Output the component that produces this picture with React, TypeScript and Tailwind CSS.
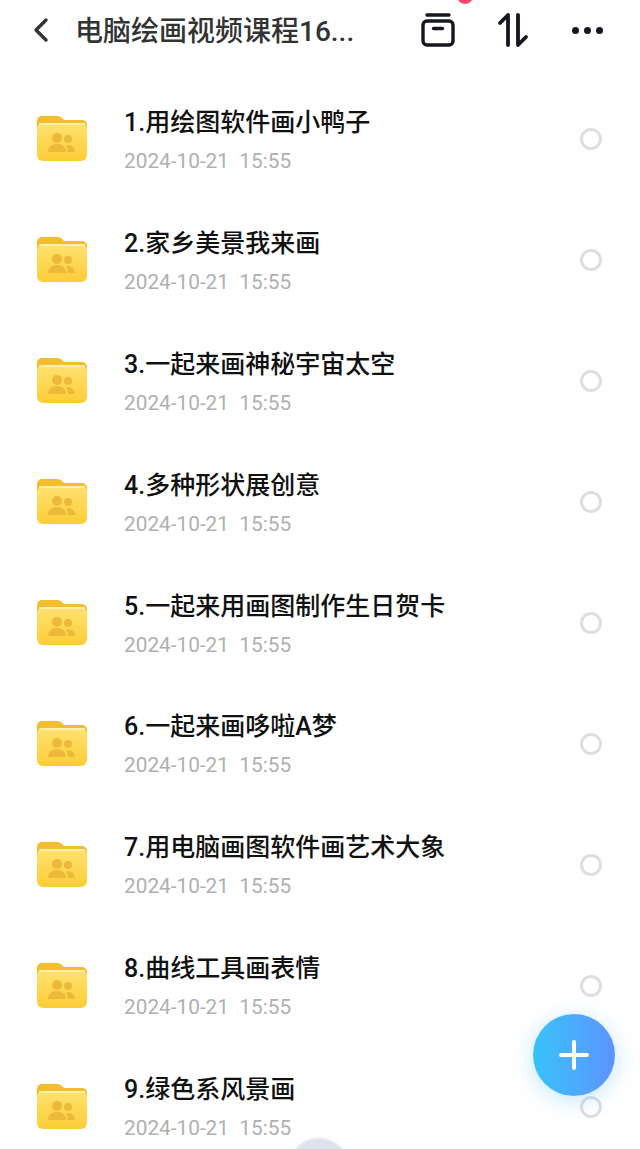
const rows = [
  '1.用绘图软件画小鸭子',
  '2.家乡美景我来画',
  '3.一起来画神秘宇宙太空',
  '4.多种形状展创意',
  '5.一起来用画图制作生日贺卡',
  '6.一起来画哆啦A梦',
  '7.用电脑画图软件画艺术大象',
  '8.曲线工具画表情',
  '9.绿色系风景画',
]

function FolderIcon() {
  return (
    <svg width="52" height="48" viewBox="0 0 52 48" className="shrink-0 blur-[0.5px]">
      <defs>
        <linearGradient id="folderBody" x1="0" y1="0" x2="0" y2="1">
          <stop offset="0" stopColor="#ffe272" />
          <stop offset="1" stopColor="#fccd36" />
        </linearGradient>
      </defs>
      <path d="M1 6a5 5 0 0 1 5-5h15c3 0 4 1 6 3l1 1h18a5 5 0 0 1 5 5v10H1z" fill="#f3bd2e" />
      <rect x="1" y="8" width="50" height="38" rx="6" fill="url(#folderBody)" />
      <rect x="3" y="8" width="46" height="2" rx="1" fill="#fff0ae" />
      <circle cx="21" cy="23" r="5" fill="#edb93a" />
      <path d="M12 37c0-5 4-8 9-8s9 3 9 8z" fill="#edb93a" />
      <circle cx="32" cy="24" r="4" fill="#edb93a" />
      <path d="M32 30c4 0 7 3 7 7h-7c0-3-1-5-2-6z" fill="#edb93a" />
    </svg>
  )
}

function ArchiveIcon() {
  return (
    <svg width="36" height="36" viewBox="0 0 36 36" fill="none" stroke="#14171f" strokeWidth="3.4" strokeLinecap="round" strokeLinejoin="round">
      <path d="M7 3h22" />
      <rect x="3" y="9" width="30" height="24" rx="4" />
      <path d="M13.5 16.5h9" />
    </svg>
  )
}

function SortIcon() {
  return (
    <svg width="32" height="36" viewBox="0 0 32 36" fill="none" stroke="#14171f" strokeWidth="3.8" strokeLinecap="round" strokeLinejoin="round">
      <path d="M11 33V3L3 11" />
      <path d="M21 3v30l8-8" />
    </svg>
  )
}

function Row({ title }: { title: string }) {
  return (
    <div className="flex h-[120.9px] items-center pl-[36px] pr-[38px]">
      <FolderIcon />
      <div className="ml-[36px] flex flex-1 flex-col">
        <span className="mt-[1px] h-[36px] text-[25px] font-medium leading-[36px] text-[#111]">{title}</span>
        <span className="mt-[6px] whitespace-pre font-['Roboto',sans-serif] text-[20.8px] leading-[28px] text-[#b0b0b0]">
          2024-10-21  15:55
        </span>
      </div>
      <span className="h-[22px] w-[22px] rounded-full border-[3px] border-[#dedede]" />
    </div>
  )
}

export default function App() {
  return (
    <div className="relative h-[1149px] w-[640px] overflow-hidden bg-white font-['Roboto','Noto_Sans_CJK_SC',sans-serif]">
      <div className="flex h-[60px] items-center pl-[30px] pr-[37px]">
        <svg width="22" height="28" viewBox="0 0 22 28" fill="none" stroke="#333" strokeWidth="3.4" strokeLinecap="round" strokeLinejoin="round">
          <path d="M16 4 6 14l10 10" />
        </svg>
        <span className="ml-[23px] mt-[3px] w-[290px] text-[28px] font-medium leading-[36px] text-[#333]">电脑绘画视频课程16...</span>
        <div className="ml-auto flex items-center">
          <div className="relative">
            <ArchiveIcon />
            <span className="absolute left-[37px] top-[-24px] h-[16px] w-[16px] rounded-full bg-[#f9476f]" />
          </div>
          <div className="ml-[41px]">
            <SortIcon />
          </div>
          <div className="ml-[43px] flex gap-[5px]">
            <span className="h-[7px] w-[7px] rounded-full bg-[#14171f]" />
            <span className="h-[7px] w-[7px] rounded-full bg-[#14171f]" />
            <span className="h-[7px] w-[7px] rounded-full bg-[#14171f]" />
          </div>
        </div>
      </div>
      <div className="pt-[19px]">
        {rows.map((r) => (
          <Row key={r} title={r} />
        ))}
      </div>
      <div className="absolute left-[533px] top-[1014px] flex h-[82px] w-[82px] items-center justify-center rounded-full bg-gradient-to-r from-[#35c3f8] to-[#5a93ff] shadow-[0_4px_22px_rgba(60,170,255,0.3)]">
        <svg width="32" height="32" viewBox="0 0 32 32" stroke="#fff" strokeWidth="4" strokeLinecap="round">
          <path d="M16 3v26M3 16h26" />
        </svg>
      </div>
      <div className="absolute left-[289px] top-[1138px] h-[60px] w-[60px] rounded-full bg-[#dde2ed] blur-[1px]" />
    </div>
  )
}
